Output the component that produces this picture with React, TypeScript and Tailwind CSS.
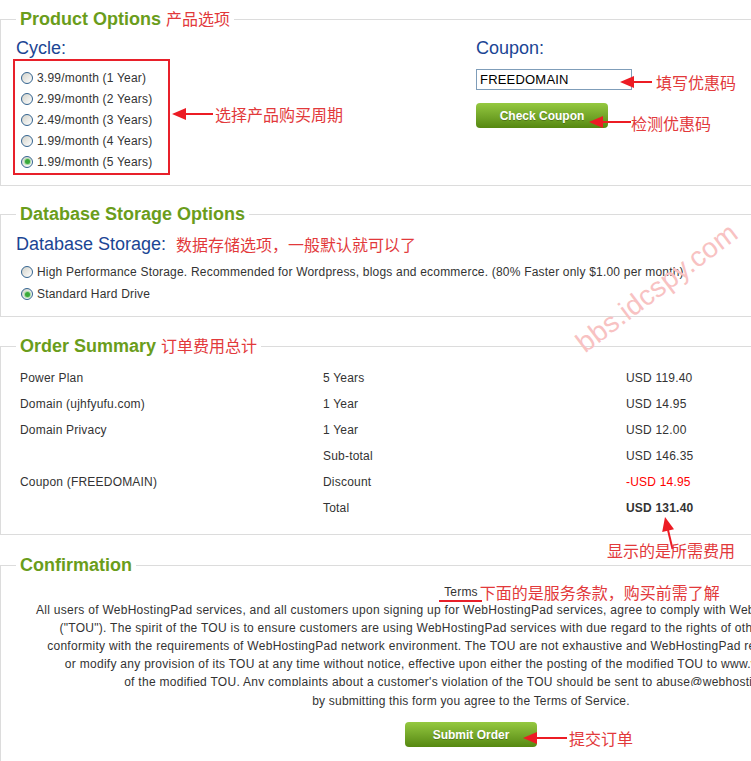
import React from "react";

const cjk = "font-['Noto_Sans_CJK_SC',sans-serif] text-[16px] leading-[20px] font-normal tracking-normal text-[#e2393b]";

function Radio({ checked = false }: { checked?: boolean }) {
  return (
    <span className="flex h-[12px] w-[12px] shrink-0 items-center justify-center rounded-full border border-[#33638f] bg-linear-to-br from-[#d2d2ca] to-white">
      {checked && <span className="h-[5px] w-[5px] rounded-full bg-[#3aa83a] ring-1 ring-[#a6dca6]" />}
    </span>
  );
}

// red arrow pointing left, tip at x=0
function LeftArrow({ w }: { w: number }) {
  return (
    <svg width={w} height={14} viewBox={`0 0 ${w} 14`} className="block shrink-0">
      <polygon points="0,7 14,1 14,13" fill="#ec1c24" />
      <rect x="13" y="6" width={w - 13} height="2" fill="#ec1c24" />
    </svg>
  );
}

function GreenButton({ label }: { label: string }) {
  return (
    <button
      type="button"
      className="h-[25px] w-[132px] rounded-[4px] bg-linear-to-b from-[#95c940] to-[#568810] text-[12px] font-bold tracking-normal text-white [text-shadow:0_1px_0_rgba(0,0,0,0.25)]"
    >
      {label}
    </button>
  );
}

const cycles = [
  "3.99/month (1 Year)",
  "2.99/month (2 Years)",
  "2.49/month (3 Years)",
  "1.99/month (4 Years)",
  "1.99/month (5 Years)",
];

const summary: [string, string, string][] = [
  ["Power Plan", "5 Years", "USD 119.40"],
  ["Domain (ujhfyufu.com)", "1 Year", "USD 14.95"],
  ["Domain Privacy", "1 Year", "USD 12.00"],
  ["", "Sub-total", "USD 146.35"],
  ["Coupon (FREEDOMAIN)", "Discount", "-USD 14.95"],
];

const tou = [
  "All users of WebHostingPad services, and all customers upon signing up for WebHostingPad services, agree to comply with WebHostingPad's Terms of Use",
  "(\"TOU\"). The spirit of the TOU is to ensure customers are using WebHostingPad services with due regard to the rights of other Internet users and in",
  "conformity with the requirements of WebHostingPad network environment. The TOU are not exhaustive and WebHostingPad reserves the right to add to",
  "or modify any provision of its TOU at any time without notice, effective upon either the posting of the modified TOU to www.webhostingpad.com or",
  "of the modified TOU. Any complaints about a customer's violation of the TOU should be sent to abuse@webhostingpad.com.",
];

export default function App() {
  return (
    <div className="relative h-[761px] w-[751px] overflow-hidden bg-white font-['Liberation_Sans',Arial,sans-serif] text-[12px] tracking-[0.2px] text-[#333]">
      {/* Product options */}
      <fieldset className="mt-[8px] w-[942px] border border-[#dcdcdc] px-[15px] pt-[8px] pb-[10px]">
        <legend className="px-[4px] text-[18px] font-bold leading-[21px] tracking-normal text-[#6a9d1b]">
          Product Options<span className={`${cjk} ml-[5px]`}>产品选项</span>
        </legend>
        <div className="flex">
          <div className="w-[460px]">
            <div className="text-[18px] leading-[20px] tracking-normal text-[#1b4594]">Cycle:</div>
            <div className="mt-[1px] flex items-center">
              <div className="-ml-[3px] w-[157px] border-2 border-[#e8202a] pt-[6px] pb-[1px] pl-[6px]">
                {cycles.map((c, i) => (
                  <div key={c} className="flex h-[21px] items-center">
                    <Radio checked={i === 4} />
                    <span className="ml-[4px]">{c}</span>
                  </div>
                ))}
              </div>
              <div className="-mt-[6px] ml-[2px] flex items-center">
                <LeftArrow w={41} />
                <span className={`${cjk} ml-[2px]`}>选择产品购买周期</span>
              </div>
            </div>
          </div>
          <div>
            <div className="text-[18px] leading-[20px] tracking-normal text-[#1b4594]">Coupon:</div>
            <div className="relative mt-[11px] w-[156px]">
              <input
                readOnly
                defaultValue="FREEDOMAIN"
                className="block h-[21px] w-[156px] border border-[#7f9db9] px-[3px] font-['Liberation_Sans',Arial,sans-serif] text-[13px] text-black outline-none"
              />
              <div className="absolute top-[3px] left-[144px] flex items-center">
                <LeftArrow w={32} />
                <span className={`${cjk} ml-[4px] whitespace-nowrap`}>填写优惠码</span>
              </div>
            </div>
            <div className="relative mt-[13px] w-[132px]">
              <GreenButton label="Check Coupon" />
              <div className="absolute top-[7px] left-[113px] flex items-center">
                <LeftArrow w={42} />
                <span className={`${cjk} mt-[3px] whitespace-nowrap`}>检测优惠码</span>
              </div>
            </div>
          </div>
        </div>
      </fieldset>

      {/* Database storage */}
      <fieldset className="mt-[18px] w-[942px] border border-[#dcdcdc] px-[15px] pt-[9px] pb-[11px]">
        <legend className="px-[4px] text-[18px] font-bold leading-[21px] tracking-normal text-[#6a9d1b]">
          Database Storage Options
        </legend>
        <div className="flex items-center text-[18px] leading-[20px] tracking-normal text-[#1b4594]">
          Database Storage:<span className={`${cjk} ml-[10px]`}>数据存储选项，一般默认就可以了</span>
        </div>
        <div className="mt-[7px] pl-[5px]">
          <div className="flex h-[22px] items-center">
            <Radio />
            <span className="ml-[4px]">
              High Performance Storage. Recommended for Wordpress, blogs and ecommerce. (80% Faster only $1.00 per month)
            </span>
          </div>
          <div className="flex h-[22px] items-center">
            <Radio checked />
            <span className="ml-[4px]">Standard Hard Drive</span>
          </div>
        </div>
      </fieldset>

      {/* Order summary */}
      <fieldset className="mt-[18px] w-[942px] border border-[#dcdcdc] px-[15px] pt-[8px] pb-[13px]">
        <legend className="px-[4px] text-[18px] font-bold leading-[21px] tracking-normal text-[#6a9d1b]">
          Order Summary<span className={`${cjk} ml-[5px]`}>订单费用总计</span>
        </legend>
        <div className="grid grid-cols-[303px_303px_303px] pl-[4px]">
          {summary.map(([a, b, c]) => (
            <React.Fragment key={a + b}>
              <div className="flex h-[26px] items-center">{a}</div>
              <div className="flex h-[26px] items-center">{b}</div>
              <div className={`flex h-[26px] items-center ${c.startsWith("-") ? "text-[#ff0000]" : ""}`}>{c}</div>
            </React.Fragment>
          ))}
          <div className="h-[26px]" />
          <div className="flex h-[26px] items-center">Total</div>
          <div className="relative flex h-[26px] items-center font-bold">
            USD 131.40
            <svg width="25" height="40" viewBox="0 0 25 40" className="absolute top-[17px] left-[29px]">
              <polygon points="10,5 19,17.3 7.2,20" fill="#ec1c24" />
              <line x1="13" y1="18" x2="17.5" y2="37" stroke="#ec1c24" strokeWidth="2" />
            </svg>
            <span className={`${cjk} absolute top-[45px] -left-[19px] whitespace-nowrap`}>显示的是所需费用</span>
          </div>
        </div>
      </fieldset>

      {/* Confirmation */}
      <fieldset className="mt-[20px] w-[942px] border border-[#dcdcdc] px-[15px] pt-[7px] pb-[20px]">
        <legend className="px-[4px] text-[18px] font-bold leading-[21px] tracking-normal text-[#6a9d1b]">Confirmation</legend>
        <div className="flex h-[18px] items-center justify-center">
          <span className="relative -ml-[20px] leading-[18px]">
            Terms
            <span className="absolute -bottom-[1px] -left-[5px] h-[2px] w-[43px] bg-[#e8202a]" />
            <span className={`${cjk} absolute -top-[1px] left-full ml-[2px] whitespace-nowrap`}>
              下面的是服务条款，购买前需了解
            </span>
          </span>
        </div>
        <div className="h-[85px] overflow-hidden text-center leading-[18px] tracking-[0.28px]">
          {tou.map((l) => (
            <div key={l} className="whitespace-nowrap">
              {l}
            </div>
          ))}
        </div>
        <div className="mt-[6px] text-center leading-[18px]">by submitting this form you agree to the Terms of Service.</div>
        <div className="mt-[12px] flex justify-center">
          <div className="relative">
            <GreenButton label="Submit Order" />
            <div className="absolute top-[6px] left-[118px] flex items-center">
              <LeftArrow w={44} />
              <span className={`${cjk} ml-[2px] whitespace-nowrap`}>提交订单</span>
            </div>
          </div>
        </div>
      </fieldset>

      {/* watermark */}
      <span className="pointer-events-none absolute top-[288px] left-[657px] -translate-x-1/2 -translate-y-1/2 -rotate-[37deg] text-[28px] whitespace-nowrap text-[#f8c2c2]">
        bbs.idcspy.com
      </span>
    </div>
  );
}
